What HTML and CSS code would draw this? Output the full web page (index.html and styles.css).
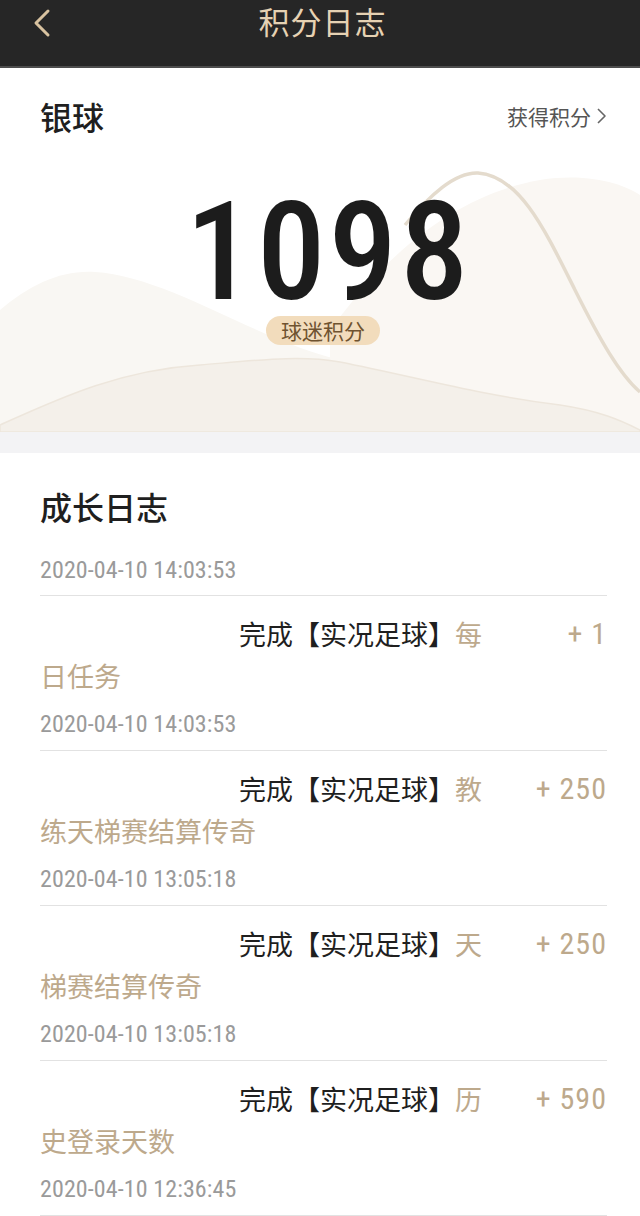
FILE: index.html
```html
<!DOCTYPE html>
<html lang="zh-CN">
<head>
<meta charset="utf-8">
<title>积分日志</title>
<link rel="stylesheet" href="styles.css">
</head>
<body>
<header class="topbar">
  <span class="back"><svg width="20" height="30" viewBox="0 0 20 30"><polyline points="16,3 4,15 16,27" fill="none" stroke="#d8c2a0" stroke-width="3" stroke-linecap="round" stroke-linejoin="round"/></svg></span>
  <h1 class="topbar-title">积分日志</h1>
</header>

<section class="card">
  <svg class="waves" viewBox="0 68 640 364" preserveAspectRatio="none">
    <path d="M0,310 C30,285 60,270 95,272 C150,275 220,315 280,340 C310,352 330,358 350,362 L640,432 L0,432 Z" fill="#f9f7f3"/>
    <path d="M330,330 C380,262 450,196 540,180 C590,172 625,185 640,195 L640,432 L330,432 Z" fill="#faf7f3"/>
    <path d="M330,320 C355,280 380,250 405,225" fill="none" stroke="#ffffff" stroke-width="4" opacity="0.8"/>
    <path d="M405,225 C430,195 455,172 478,173 C520,176 545,230 575,290 C600,340 620,375 640,392" fill="none" stroke="#e4dbcd" stroke-width="3.5"/>
    <path d="M0,425 C60,398 120,370 200,365 C260,360 300,355 340,362 C420,378 480,395 560,405 C600,411 620,420 640,430 L640,432 L0,432 Z" fill="#f4f0ea" stroke="#ede6dc" stroke-width="1.5"/>
  </svg>
  <div class="card-head">
    <span class="tier">银球</span>
    <a class="earn">获得积分<svg width="12" height="18" viewBox="0 0 12 18"><polyline points="3,2 10,9 3,16" fill="none" stroke="#666" stroke-width="1.6" stroke-linejoin="round"/></svg></a>
  </div>
  <div class="score">1098</div>
  <div class="badge">球迷积分</div>
</section>

<div class="gap"></div>

<section class="log">
  <h2 class="log-title">成长日志</h2>
  <div class="log-date lead">2020-04-10 14:03:53</div>
  <ul class="entries">
    <li class="entry">
      <div class="entry-row">
        <p class="entry-text"><span class="dark">完成【实况足球】</span><span class="gold">每</span><span class="gold">日任务</span></p>
        <span class="amount">+ 1</span>
      </div>
      <div class="log-date">2020-04-10 14:03:53</div>
    </li>
    <li class="entry">
      <div class="entry-row">
        <p class="entry-text"><span class="dark">完成【实况足球】</span><span class="gold">教</span><span class="gold">练天梯赛结算传奇</span></p>
        <span class="amount">+ 250</span>
      </div>
      <div class="log-date">2020-04-10 13:05:18</div>
    </li>
    <li class="entry">
      <div class="entry-row">
        <p class="entry-text"><span class="dark">完成【实况足球】</span><span class="gold">天</span><span class="gold">梯赛结算传奇</span></p>
        <span class="amount">+ 250</span>
      </div>
      <div class="log-date">2020-04-10 13:05:18</div>
    </li>
    <li class="entry">
      <div class="entry-row">
        <p class="entry-text"><span class="dark">完成【实况足球】</span><span class="gold">历</span><span class="gold">史登录天数</span></p>
        <span class="amount">+ 590</span>
      </div>
      <div class="log-date">2020-04-10 12:36:45</div>
    </li>
  </ul>
</section>
</body>
</html>
```

FILE: styles.css
```css
* { box-sizing: border-box; }
html, body {
  margin: 0;
  padding: 0;
  background: #ffffff;
  font-family: "Noto Sans CJK SC", "Noto Sans", sans-serif;
  color: #222;
}

.topbar {
  height: 68px;
  background: #262626;
  border-bottom: 2px solid #4d4d4d;
  display: flex;
  justify-content: center;
  position: relative;
}
.back {
  position: absolute;
  left: 32px;
  top: 8px;
  display: block;
}
.back svg { display: block; }
.topbar-title {
  margin: 0 0 0 5px;
  font-size: 31px;
  font-weight: 400;
  line-height: 42px;
  color: #e6d2b3;
  letter-spacing: 1px;
}

.card {
  position: relative;
  height: 364px;
  overflow: hidden;
  display: flex;
  flex-direction: column;
  align-items: center;
}
.waves {
  position: absolute;
  left: 0;
  top: 0;
  width: 640px;
  height: 364px;
  z-index: 0;
}
.card-head, .score, .badge { position: relative; z-index: 1; }
.card-head {
  width: 100%;
  padding: 26px 33px 0 40px;
  display: flex;
  align-items: center;
  justify-content: space-between;
}
.tier {
  font-size: 32px;
  font-weight: 500;
  line-height: 44px;
  color: #1f1f1f;
}
.earn {
  display: flex;
  align-items: center;
  gap: 4px;
  font-size: 21px;
  color: #555;
  line-height: 30px;
}
.earn svg { display: block; }

.score {
  margin-top: 64px;
  margin-left: 17px;
  font-family: "Liberation Sans Narrow", "Roboto Condensed", "Roboto", sans-serif;
  font-size: 137px;
  font-weight: 500;
  line-height: 100px;
  letter-spacing: 3px;
  color: #1c1c1c;
}
.badge {
  margin-top: 14px;
  margin-left: 6px;
  height: 29px;
  padding: 0 15px;
  border-radius: 15px;
  background: #f2dcbc;
  color: #6f5330;
  font-size: 21px;
  line-height: 29px;
}

.gap {
  height: 21px;
  background: #f3f3f5;
}

.log {
  padding: 31px 33px 0 40px;
}
.log-title {
  margin: 0;
  font-size: 32px;
  font-weight: 500;
  line-height: 44px;
  color: #1f1f1f;
}
.log-date {
  font-family: "Liberation Sans Narrow", "Roboto Condensed", "Roboto", sans-serif;
  font-size: 24px;
  line-height: 28px;
  letter-spacing: 0.1px;
  color: #9a9a9a;
  margin-top: 13px;
}
.log-date.lead {
  margin-top: 28px;
  padding-bottom: 11px;
}
.entries {
  list-style: none;
  margin: 0;
  padding: 0;
}
.entry {
  border-top: 1px solid #e2e2e2;
  padding: 17px 0 12px;
}
.entry:last-child { border-bottom: 1px solid #e2e2e2; }
.entry-row {
  display: flex;
  justify-content: space-between;
  align-items: flex-start;
}
.entry-text {
  margin: 0;
  width: 450px;
  text-indent: 199px;
  font-size: 27px;
  line-height: 42px;
}
.dark { color: #1f1f1f; }
.gold { color: #bda98c; }
.amount {
  font-family: "Liberation Sans Narrow", "Roboto Condensed", "Roboto", sans-serif;
  font-size: 30px;
  line-height: 42px;
  letter-spacing: 1px;
  color: #bda98c;
}
```
